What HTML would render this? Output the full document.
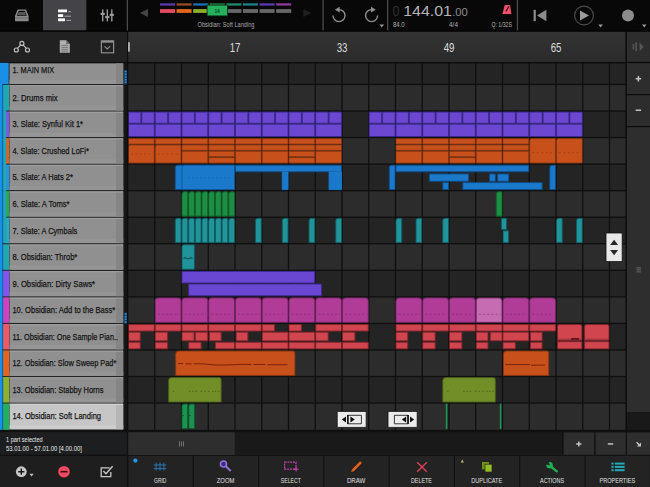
<!DOCTYPE html>
<html lang="en"><head><meta charset="utf-8"><title>Arranger</title>
<style>
html,body{margin:0;padding:0;background:#0d0d0d;overflow:hidden}
body{width:650px;height:487px;position:relative}
svg{display:block;position:absolute;left:0;top:0}
text{font-family:"Liberation Sans",sans-serif}
</style></head><body>
<svg width="650" height="487" viewBox="0 0 650 487">
<defs><linearGradient id="rul" x1="0" y1="0" x2="0" y2="1"><stop offset="0" stop-color="#343434"/><stop offset="1" stop-color="#2a2a2a"/></linearGradient></defs>
<rect x="0.00" y="0.00" width="650.00" height="487.00" fill="#0d0d0d" />
<g id="grid">
<rect x="128.00" y="62.00" width="497.80" height="368.00" fill="#242424" />
<rect x="128.00" y="84.45" width="497.80" height="26.55" fill="#2c2c2c" />
<rect x="128.00" y="137.55" width="497.80" height="26.55" fill="#2c2c2c" />
<rect x="128.00" y="190.65" width="497.80" height="26.55" fill="#2c2c2c" />
<rect x="128.00" y="243.75" width="497.80" height="26.55" fill="#2c2c2c" />
<rect x="128.00" y="296.85" width="497.80" height="26.55" fill="#2c2c2c" />
<rect x="128.00" y="349.95" width="497.80" height="26.55" fill="#2c2c2c" />
<rect x="128.00" y="403.05" width="497.80" height="26.85" fill="#2c2c2c" />
<rect x="154.10" y="62.00" width="1.30" height="368.00" fill="#0f0f0f" />
<rect x="180.85" y="62.00" width="1.30" height="368.00" fill="#0f0f0f" />
<rect x="207.60" y="62.00" width="1.30" height="368.00" fill="#0f0f0f" />
<rect x="234.35" y="62.00" width="1.30" height="368.00" fill="#0f0f0f" />
<rect x="261.10" y="62.00" width="1.30" height="368.00" fill="#0f0f0f" />
<rect x="287.85" y="62.00" width="1.30" height="368.00" fill="#0f0f0f" />
<rect x="314.60" y="62.00" width="1.30" height="368.00" fill="#0f0f0f" />
<rect x="341.35" y="62.00" width="1.30" height="368.00" fill="#0f0f0f" />
<rect x="368.10" y="62.00" width="1.30" height="368.00" fill="#0f0f0f" />
<rect x="394.85" y="62.00" width="1.30" height="368.00" fill="#0f0f0f" />
<rect x="421.60" y="62.00" width="1.30" height="368.00" fill="#0f0f0f" />
<rect x="448.35" y="62.00" width="1.30" height="368.00" fill="#0f0f0f" />
<rect x="475.10" y="62.00" width="1.30" height="368.00" fill="#0f0f0f" />
<rect x="501.85" y="62.00" width="1.30" height="368.00" fill="#0f0f0f" />
<rect x="528.60" y="62.00" width="1.30" height="368.00" fill="#0f0f0f" />
<rect x="555.35" y="62.00" width="1.30" height="368.00" fill="#0f0f0f" />
<rect x="582.10" y="62.00" width="1.30" height="368.00" fill="#0f0f0f" />
<rect x="608.85" y="62.00" width="1.30" height="368.00" fill="#0f0f0f" />
<rect x="128.00" y="83.80" width="497.80" height="1.30" fill="#0f0f0f" />
<rect x="128.00" y="110.35" width="497.80" height="1.30" fill="#0f0f0f" />
<rect x="128.00" y="136.90" width="497.80" height="1.30" fill="#0f0f0f" />
<rect x="128.00" y="163.45" width="497.80" height="1.30" fill="#0f0f0f" />
<rect x="128.00" y="190.00" width="497.80" height="1.30" fill="#0f0f0f" />
<rect x="128.00" y="216.55" width="497.80" height="1.30" fill="#0f0f0f" />
<rect x="128.00" y="243.10" width="497.80" height="1.30" fill="#0f0f0f" />
<rect x="128.00" y="269.65" width="497.80" height="1.30" fill="#0f0f0f" />
<rect x="128.00" y="296.20" width="497.80" height="1.30" fill="#0f0f0f" />
<rect x="128.00" y="322.75" width="497.80" height="1.30" fill="#0f0f0f" />
<rect x="128.00" y="349.30" width="497.80" height="1.30" fill="#0f0f0f" />
<rect x="128.00" y="375.85" width="497.80" height="1.30" fill="#0f0f0f" />
<rect x="128.00" y="402.40" width="497.80" height="1.30" fill="#0f0f0f" />
</g>
<g id="clips">
<path d="M128.45 123.25V112.05H140.93V123.25Z" fill="#6b47d2" stroke="#3c2890" stroke-width="0.9"/>
<path d="M141.82 123.25V112.05H154.30V123.25Z" fill="#6b47d2" stroke="#3c2890" stroke-width="0.9"/>
<path d="M155.20 123.25V112.05H167.68V123.25Z" fill="#6b47d2" stroke="#3c2890" stroke-width="0.9"/>
<path d="M168.57 123.25V112.05H181.05V123.25Z" fill="#6b47d2" stroke="#3c2890" stroke-width="0.9"/>
<path d="M181.95 123.25V112.05H194.43V123.25Z" fill="#6b47d2" stroke="#3c2890" stroke-width="0.9"/>
<path d="M195.32 123.25V112.05H207.80V123.25Z" fill="#6b47d2" stroke="#3c2890" stroke-width="0.9"/>
<path d="M208.70 123.25V112.05H221.18V123.25Z" fill="#6b47d2" stroke="#3c2890" stroke-width="0.9"/>
<path d="M222.07 123.25V112.05H234.55V123.25Z" fill="#6b47d2" stroke="#3c2890" stroke-width="0.9"/>
<path d="M235.45 123.25V112.05H247.93V123.25Z" fill="#6b47d2" stroke="#3c2890" stroke-width="0.9"/>
<path d="M248.82 123.25V112.05H261.30V123.25Z" fill="#6b47d2" stroke="#3c2890" stroke-width="0.9"/>
<path d="M262.20 123.25V112.05H274.68V123.25Z" fill="#6b47d2" stroke="#3c2890" stroke-width="0.9"/>
<path d="M275.57 123.25V112.05H288.05V123.25Z" fill="#6b47d2" stroke="#3c2890" stroke-width="0.9"/>
<path d="M288.95 123.25V112.05H301.43V123.25Z" fill="#6b47d2" stroke="#3c2890" stroke-width="0.9"/>
<path d="M302.32 123.25V112.05H314.80V123.25Z" fill="#6b47d2" stroke="#3c2890" stroke-width="0.9"/>
<path d="M315.70 123.25V112.05H328.18V123.25Z" fill="#6b47d2" stroke="#3c2890" stroke-width="0.9"/>
<path d="M329.07 123.25V112.05H341.55V123.25Z" fill="#6b47d2" stroke="#3c2890" stroke-width="0.9"/>
<path d="M128.45 136.50V124.15H154.30V136.50Z" fill="#6b47d2" stroke="#3c2890" stroke-width="0.9"/>
<path d="M155.20 136.50V124.15H181.05V136.50Z" fill="#6b47d2" stroke="#3c2890" stroke-width="0.9"/>
<path d="M181.95 136.50V124.15H207.80V136.50Z" fill="#6b47d2" stroke="#3c2890" stroke-width="0.9"/>
<path d="M208.70 136.50V124.15H234.55V136.50Z" fill="#6b47d2" stroke="#3c2890" stroke-width="0.9"/>
<path d="M235.45 136.50V124.15H261.30V136.50Z" fill="#6b47d2" stroke="#3c2890" stroke-width="0.9"/>
<path d="M262.20 136.50V124.15H288.05V136.50Z" fill="#6b47d2" stroke="#3c2890" stroke-width="0.9"/>
<path d="M288.95 136.50V124.15H314.80V136.50Z" fill="#6b47d2" stroke="#3c2890" stroke-width="0.9"/>
<path d="M315.70 136.50V124.15H341.55V136.50Z" fill="#6b47d2" stroke="#3c2890" stroke-width="0.9"/>
<path d="M369.20 123.25V112.05H381.68V123.25Z" fill="#6b47d2" stroke="#3c2890" stroke-width="0.9"/>
<path d="M382.57 123.25V112.05H395.05V123.25Z" fill="#6b47d2" stroke="#3c2890" stroke-width="0.9"/>
<path d="M395.95 123.25V112.05H408.43V123.25Z" fill="#6b47d2" stroke="#3c2890" stroke-width="0.9"/>
<path d="M409.32 123.25V112.05H421.80V123.25Z" fill="#6b47d2" stroke="#3c2890" stroke-width="0.9"/>
<path d="M422.70 123.25V112.05H435.18V123.25Z" fill="#6b47d2" stroke="#3c2890" stroke-width="0.9"/>
<path d="M436.07 123.25V112.05H448.55V123.25Z" fill="#6b47d2" stroke="#3c2890" stroke-width="0.9"/>
<path d="M449.45 123.25V112.05H461.93V123.25Z" fill="#6b47d2" stroke="#3c2890" stroke-width="0.9"/>
<path d="M462.82 123.25V112.05H475.30V123.25Z" fill="#6b47d2" stroke="#3c2890" stroke-width="0.9"/>
<path d="M476.20 123.25V112.05H488.68V123.25Z" fill="#6b47d2" stroke="#3c2890" stroke-width="0.9"/>
<path d="M489.57 123.25V112.05H502.05V123.25Z" fill="#6b47d2" stroke="#3c2890" stroke-width="0.9"/>
<path d="M502.95 123.25V112.05H515.42V123.25Z" fill="#6b47d2" stroke="#3c2890" stroke-width="0.9"/>
<path d="M516.33 123.25V112.05H528.80V123.25Z" fill="#6b47d2" stroke="#3c2890" stroke-width="0.9"/>
<path d="M529.70 123.25V112.05H542.17V123.25Z" fill="#6b47d2" stroke="#3c2890" stroke-width="0.9"/>
<path d="M543.08 123.25V112.05H555.55V123.25Z" fill="#6b47d2" stroke="#3c2890" stroke-width="0.9"/>
<path d="M556.45 123.25V112.05H568.92V123.25Z" fill="#6b47d2" stroke="#3c2890" stroke-width="0.9"/>
<path d="M569.83 123.25V112.05H582.30V123.25Z" fill="#6b47d2" stroke="#3c2890" stroke-width="0.9"/>
<path d="M369.20 136.50V124.15H395.05V136.50Z" fill="#6b47d2" stroke="#3c2890" stroke-width="0.9"/>
<path d="M395.95 136.50V124.15H421.80V136.50Z" fill="#6b47d2" stroke="#3c2890" stroke-width="0.9"/>
<path d="M422.70 136.50V124.15H448.55V136.50Z" fill="#6b47d2" stroke="#3c2890" stroke-width="0.9"/>
<path d="M449.45 136.50V124.15H475.30V136.50Z" fill="#6b47d2" stroke="#3c2890" stroke-width="0.9"/>
<path d="M476.20 136.50V124.15H502.05V136.50Z" fill="#6b47d2" stroke="#3c2890" stroke-width="0.9"/>
<path d="M502.95 136.50V124.15H528.80V136.50Z" fill="#6b47d2" stroke="#3c2890" stroke-width="0.9"/>
<path d="M529.70 136.50V124.15H555.55V136.50Z" fill="#6b47d2" stroke="#3c2890" stroke-width="0.9"/>
<path d="M556.45 136.50V124.15H582.30V136.50Z" fill="#6b47d2" stroke="#3c2890" stroke-width="0.9"/>
<path d="M128.45 144.10V138.60H154.30V144.10Z" fill="#c8501a" stroke="#843410" stroke-width="0.75"/>
<path d="M128.45 163.05V147.00Q128.45 145.00 130.45 145.00H154.30V163.05Z" fill="#c8501a" stroke="#843410" stroke-width="0.75"/>
<path d="M131.00 154.05H152.75" stroke="#843410" stroke-width="0.8" stroke-dasharray="2 2.4" opacity="0.55"/>
<path d="M155.20 144.10V138.60H181.05V144.10Z" fill="#c8501a" stroke="#843410" stroke-width="0.75"/>
<path d="M155.20 163.05V147.00Q155.20 145.00 157.20 145.00H181.05V163.05Z" fill="#c8501a" stroke="#843410" stroke-width="0.75"/>
<path d="M157.75 154.05H179.50" stroke="#843410" stroke-width="0.8" stroke-dasharray="2 2.4" opacity="0.55"/>
<path d="M181.95 144.10V138.60H207.80V144.10Z" fill="#c8501a" stroke="#843410" stroke-width="0.75"/>
<path d="M181.95 150.30V145.00H207.80V150.30Z" fill="#c8501a" stroke="#843410" stroke-width="0.75"/>
<path d="M181.95 163.05V151.20H207.80V163.05Z" fill="#c8501a" stroke="#843410" stroke-width="0.75"/>
<path d="M208.70 144.10V138.60H234.55V144.10Z" fill="#c8501a" stroke="#843410" stroke-width="0.75"/>
<path d="M208.70 150.30V145.00H234.55V150.30Z" fill="#c8501a" stroke="#843410" stroke-width="0.75"/>
<path d="M208.70 156.70V151.20H234.55V156.70Z" fill="#c8501a" stroke="#843410" stroke-width="0.75"/>
<path d="M208.70 163.05V157.60H234.55V163.05Z" fill="#c8501a" stroke="#843410" stroke-width="0.75"/>
<path d="M235.45 144.10V138.60H261.30V144.10Z" fill="#c8501a" stroke="#843410" stroke-width="0.75"/>
<path d="M235.45 150.30V145.00H261.30V150.30Z" fill="#c8501a" stroke="#843410" stroke-width="0.75"/>
<path d="M235.45 163.05V151.20H261.30V163.05Z" fill="#c8501a" stroke="#843410" stroke-width="0.75"/>
<path d="M262.20 144.10V138.60H288.05V144.10Z" fill="#c8501a" stroke="#843410" stroke-width="0.75"/>
<path d="M262.20 150.30V145.00H288.05V150.30Z" fill="#c8501a" stroke="#843410" stroke-width="0.75"/>
<path d="M262.20 163.05V151.20H288.05V163.05Z" fill="#c8501a" stroke="#843410" stroke-width="0.75"/>
<path d="M288.95 144.10V138.60H314.80V144.10Z" fill="#c8501a" stroke="#843410" stroke-width="0.75"/>
<path d="M288.95 150.30V145.00H314.80V150.30Z" fill="#c8501a" stroke="#843410" stroke-width="0.75"/>
<path d="M288.95 156.70V151.20H314.80V156.70Z" fill="#c8501a" stroke="#843410" stroke-width="0.75"/>
<path d="M288.95 163.05V157.60H314.80V163.05Z" fill="#c8501a" stroke="#843410" stroke-width="0.75"/>
<path d="M315.70 144.10V138.60H341.55V144.10Z" fill="#c8501a" stroke="#843410" stroke-width="0.75"/>
<path d="M315.70 150.30V145.00H341.55V150.30Z" fill="#c8501a" stroke="#843410" stroke-width="0.75"/>
<path d="M315.70 163.05V151.20H341.55V163.05Z" fill="#c8501a" stroke="#843410" stroke-width="0.75"/>
<path d="M395.95 144.10V138.60H421.80V144.10Z" fill="#c8501a" stroke="#843410" stroke-width="0.75"/>
<path d="M395.95 150.30V145.00H421.80V150.30Z" fill="#c8501a" stroke="#843410" stroke-width="0.75"/>
<path d="M395.95 163.05V151.20H421.80V163.05Z" fill="#c8501a" stroke="#843410" stroke-width="0.75"/>
<path d="M422.70 144.10V138.60H448.55V144.10Z" fill="#c8501a" stroke="#843410" stroke-width="0.75"/>
<path d="M422.70 150.30V145.00H448.55V150.30Z" fill="#c8501a" stroke="#843410" stroke-width="0.75"/>
<path d="M422.70 163.05V151.20H448.55V163.05Z" fill="#c8501a" stroke="#843410" stroke-width="0.75"/>
<path d="M449.45 144.10V138.60H475.30V144.10Z" fill="#c8501a" stroke="#843410" stroke-width="0.75"/>
<path d="M449.45 150.30V145.00H475.30V150.30Z" fill="#c8501a" stroke="#843410" stroke-width="0.75"/>
<path d="M449.45 156.70V151.20H475.30V156.70Z" fill="#c8501a" stroke="#843410" stroke-width="0.75"/>
<path d="M449.45 163.05V157.60H475.30V163.05Z" fill="#c8501a" stroke="#843410" stroke-width="0.75"/>
<path d="M476.20 144.10V138.60H502.05V144.10Z" fill="#c8501a" stroke="#843410" stroke-width="0.75"/>
<path d="M476.20 150.30V145.00H502.05V150.30Z" fill="#c8501a" stroke="#843410" stroke-width="0.75"/>
<path d="M476.20 163.05V151.20H502.05V163.05Z" fill="#c8501a" stroke="#843410" stroke-width="0.75"/>
<path d="M502.95 144.10V138.60H528.80V144.10Z" fill="#c8501a" stroke="#843410" stroke-width="0.75"/>
<path d="M502.95 150.30V145.00H528.80V150.30Z" fill="#c8501a" stroke="#843410" stroke-width="0.75"/>
<path d="M502.95 163.05V151.20H528.80V163.05Z" fill="#c8501a" stroke="#843410" stroke-width="0.75"/>
<path d="M529.70 163.05V140.60Q529.70 138.60 531.70 138.60H555.55V163.05Z" fill="#c8501a" stroke="#843410" stroke-width="0.75"/>
<path d="M532.25 152.65H554.00" stroke="#843410" stroke-width="0.8" stroke-dasharray="2 2.4" opacity="0.55"/>
<path d="M556.45 163.05V140.60Q556.45 138.60 558.45 138.60H582.30V163.05Z" fill="#c8501a" stroke="#843410" stroke-width="0.75"/>
<path d="M559.00 152.65H580.75" stroke="#843410" stroke-width="0.8" stroke-dasharray="2 2.4" opacity="0.55"/>
<path d="M175.26 189.60V167.65Q175.26 165.15 177.76 165.15H234.55V189.60Z" fill="#1a79ca" stroke="#0f4c86" stroke-width="0.9"/>
<path d="M181.95 189.60V167.65Q181.95 165.15 184.45 165.15H234.55V189.60Z" fill="#1a79ca" stroke="#0f4c86" stroke-width="0.6"/>
<path d="M188.19 177.70H231.66" stroke="#0f4c86" stroke-width="0.7" stroke-dasharray="1.5 2.5" opacity="0.5"/>
<path d="M235.45 171.85V165.15H341.55V171.85Z" fill="#1a79ca" stroke="#0f4c86" stroke-width="0.9"/>
<path d="M282.26 189.60V171.85H288.05V189.60Z" fill="#1a79ca" stroke="#1a79ca" stroke-width="0.9"/>
<path d="M329.07 189.60V171.85H341.55V189.60Z" fill="#1a79ca" stroke="#1a79ca" stroke-width="0.9"/>
<path d="M389.26 189.60V167.65Q389.26 165.15 391.76 165.15H395.05V189.60Z" fill="#1a79ca" stroke="#0f4c86" stroke-width="0.9"/>
<path d="M395.95 171.85V165.15H528.80V171.85Z" fill="#1a79ca" stroke="#0f4c86" stroke-width="0.9"/>
<path d="M429.39 181.25V173.95H468.61V181.25Z" fill="#1a79ca" stroke="#0f4c86" stroke-width="0.9"/>
<path d="M489.57 181.25V173.95H495.36V181.25Z" fill="#1a79ca" stroke="#0f4c86" stroke-width="0.9"/>
<path d="M497.60 181.25V173.95H508.74V181.25Z" fill="#1a79ca" stroke="#0f4c86" stroke-width="0.9"/>
<path d="M442.76 189.60V182.55H448.55V189.60Z" fill="#1a79ca" stroke="#0f4c86" stroke-width="0.9"/>
<path d="M462.82 189.60V182.55H542.17V189.60Z" fill="#1a79ca" stroke="#0f4c86" stroke-width="0.9"/>
<path d="M549.76 189.60V167.65Q549.76 165.15 552.26 165.15H555.55V189.60Z" fill="#1a79ca" stroke="#0f4c86" stroke-width="0.9"/>
<path d="M181.95 216.15V194.20Q181.95 191.70 184.45 191.70H186.24Q187.74 191.70 187.74 193.20V216.15Z" fill="#1e8e44" stroke="#0e6028" stroke-width="0.9"/>
<path d="M188.64 216.15V194.20Q188.64 191.70 191.14 191.70H192.93Q194.43 191.70 194.43 193.20V216.15Z" fill="#1e8e44" stroke="#0e6028" stroke-width="0.9"/>
<path d="M195.32 216.15V194.20Q195.32 191.70 197.82 191.70H199.61Q201.11 191.70 201.11 193.20V216.15Z" fill="#1e8e44" stroke="#0e6028" stroke-width="0.9"/>
<path d="M202.01 216.15V194.20Q202.01 191.70 204.51 191.70H206.30Q207.80 191.70 207.80 193.20V216.15Z" fill="#1e8e44" stroke="#0e6028" stroke-width="0.9"/>
<path d="M208.70 216.15V194.20Q208.70 191.70 211.20 191.70H212.99Q214.49 191.70 214.49 193.20V216.15Z" fill="#1e8e44" stroke="#0e6028" stroke-width="0.9"/>
<path d="M215.39 216.15V194.20Q215.39 191.70 217.89 191.70H219.68Q221.18 191.70 221.18 193.20V216.15Z" fill="#1e8e44" stroke="#0e6028" stroke-width="0.9"/>
<path d="M222.07 216.15V194.20Q222.07 191.70 224.57 191.70H226.36Q227.86 191.70 227.86 193.20V216.15Z" fill="#1e8e44" stroke="#0e6028" stroke-width="0.9"/>
<path d="M228.76 216.15V194.20Q228.76 191.70 231.26 191.70H233.05Q234.55 191.70 234.55 193.20V216.15Z" fill="#1e8e44" stroke="#0e6028" stroke-width="0.9"/>
<path d="M496.26 216.15V194.20Q496.26 191.70 498.76 191.70H502.05V216.15Z" fill="#1e8e44" stroke="#0e6028" stroke-width="0.9"/>
<path d="M175.26 242.70V220.75Q175.26 218.25 177.76 218.25H179.55Q181.05 218.25 181.05 219.75V242.70Z" fill="#20949a" stroke="#115a60" stroke-width="0.9"/>
<path d="M181.95 242.70V220.75Q181.95 218.25 184.45 218.25H186.24Q187.74 218.25 187.74 219.75V242.70Z" fill="#20949a" stroke="#115a60" stroke-width="0.9"/>
<path d="M188.64 242.70V220.75Q188.64 218.25 191.14 218.25H192.93Q194.43 218.25 194.43 219.75V242.70Z" fill="#20949a" stroke="#115a60" stroke-width="0.9"/>
<path d="M195.32 242.70V220.75Q195.32 218.25 197.82 218.25H199.61Q201.11 218.25 201.11 219.75V242.70Z" fill="#20949a" stroke="#115a60" stroke-width="0.9"/>
<path d="M202.01 242.70V220.75Q202.01 218.25 204.51 218.25H206.30Q207.80 218.25 207.80 219.75V242.70Z" fill="#20949a" stroke="#115a60" stroke-width="0.9"/>
<path d="M208.70 242.70V220.75Q208.70 218.25 211.20 218.25H212.99Q214.49 218.25 214.49 219.75V242.70Z" fill="#20949a" stroke="#115a60" stroke-width="0.9"/>
<path d="M215.39 242.70V220.75Q215.39 218.25 217.89 218.25H219.68Q221.18 218.25 221.18 219.75V242.70Z" fill="#20949a" stroke="#115a60" stroke-width="0.9"/>
<path d="M222.07 242.70V220.75Q222.07 218.25 224.57 218.25H226.36Q227.86 218.25 227.86 219.75V242.70Z" fill="#20949a" stroke="#115a60" stroke-width="0.9"/>
<path d="M228.76 242.70V220.75Q228.76 218.25 231.26 218.25H233.05Q234.55 218.25 234.55 219.75V242.70Z" fill="#20949a" stroke="#115a60" stroke-width="0.9"/>
<path d="M255.51 242.70V220.75Q255.51 218.25 258.01 218.25H261.30V242.70Z" fill="#20949a" stroke="#115a60" stroke-width="0.9"/>
<path d="M282.26 242.70V220.75Q282.26 218.25 284.76 218.25H288.05V242.70Z" fill="#20949a" stroke="#115a60" stroke-width="0.9"/>
<path d="M309.01 242.70V220.75Q309.01 218.25 311.51 218.25H314.80V242.70Z" fill="#20949a" stroke="#115a60" stroke-width="0.9"/>
<path d="M335.76 242.70V220.75Q335.76 218.25 338.26 218.25H341.55V242.70Z" fill="#20949a" stroke="#115a60" stroke-width="0.9"/>
<path d="M395.95 242.70V220.75Q395.95 218.25 398.45 218.25H401.74V242.70Z" fill="#20949a" stroke="#115a60" stroke-width="0.9"/>
<path d="M416.01 242.70V220.75Q416.01 218.25 418.51 218.25H421.80V242.70Z" fill="#20949a" stroke="#115a60" stroke-width="0.9"/>
<path d="M442.76 242.70V220.75Q442.76 218.25 445.26 218.25H448.55V242.70Z" fill="#20949a" stroke="#115a60" stroke-width="0.9"/>
<path d="M556.45 242.70V220.75Q556.45 218.25 558.95 218.25H562.24V242.70Z" fill="#20949a" stroke="#115a60" stroke-width="0.9"/>
<path d="M576.51 242.70V220.75Q576.51 218.25 579.01 218.25H582.30V242.70Z" fill="#20949a" stroke="#115a60" stroke-width="0.9"/>
<path d="M501.45 229.55V218.25H506.55V229.55Z" fill="#20949a" stroke="#115a60" stroke-width="0.9"/>
<path d="M503.05 242.70V230.85H508.55V242.70Z" fill="#20949a" stroke="#115a60" stroke-width="0.9"/>
<path d="M181.95 269.25V246.80Q181.95 244.80 183.95 244.80H194.43V269.25Z" fill="#20949a" stroke="#115a60" stroke-width="0.9"/>
<path d="M183.50 258.35q1.5 -1.2 3 0t3 0t3 0" fill="none" stroke="#0c3a40" stroke-width="1"/>
<path d="M181.95 282.95V271.35H314.80V282.95Z" fill="#6a47d2" stroke="#3c2890" stroke-width="0.9"/>
<path d="M188.64 295.80V284.05H321.49V295.80Z" fill="#6a47d2" stroke="#3c2890" stroke-width="0.9"/>
<path d="M155.20 322.35V300.90Q155.20 297.90 158.20 297.90H178.05Q181.05 297.90 181.05 300.90V322.35Z" fill="#b03c98" stroke="#702262" stroke-width="0.9"/>
<path d="M157.75 314.25H179.50" stroke="#702262" stroke-width="0.8" stroke-dasharray="2.2 2" opacity="0.55"/>
<path d="M181.95 322.35V300.90Q181.95 297.90 184.95 297.90H204.80Q207.80 297.90 207.80 300.90V322.35Z" fill="#b03c98" stroke="#702262" stroke-width="0.9"/>
<path d="M184.50 314.25H206.25" stroke="#702262" stroke-width="0.8" stroke-dasharray="2.2 2" opacity="0.55"/>
<path d="M208.70 322.35V300.90Q208.70 297.90 211.70 297.90H231.55Q234.55 297.90 234.55 300.90V322.35Z" fill="#b03c98" stroke="#702262" stroke-width="0.9"/>
<path d="M211.25 314.25H233.00" stroke="#702262" stroke-width="0.8" stroke-dasharray="2.2 2" opacity="0.55"/>
<path d="M235.45 322.35V300.90Q235.45 297.90 238.45 297.90H258.30Q261.30 297.90 261.30 300.90V322.35Z" fill="#b03c98" stroke="#702262" stroke-width="0.9"/>
<path d="M238.00 314.25H259.75" stroke="#702262" stroke-width="0.8" stroke-dasharray="2.2 2" opacity="0.55"/>
<path d="M262.20 322.35V300.90Q262.20 297.90 265.20 297.90H285.05Q288.05 297.90 288.05 300.90V322.35Z" fill="#b03c98" stroke="#702262" stroke-width="0.9"/>
<path d="M264.75 314.25H286.50" stroke="#702262" stroke-width="0.8" stroke-dasharray="2.2 2" opacity="0.55"/>
<path d="M288.95 322.35V300.90Q288.95 297.90 291.95 297.90H311.80Q314.80 297.90 314.80 300.90V322.35Z" fill="#b03c98" stroke="#702262" stroke-width="0.9"/>
<path d="M291.50 314.25H313.25" stroke="#702262" stroke-width="0.8" stroke-dasharray="2.2 2" opacity="0.55"/>
<path d="M315.70 322.35V300.90Q315.70 297.90 318.70 297.90H338.55Q341.55 297.90 341.55 300.90V322.35Z" fill="#b03c98" stroke="#702262" stroke-width="0.9"/>
<path d="M318.25 314.25H340.00" stroke="#702262" stroke-width="0.8" stroke-dasharray="2.2 2" opacity="0.55"/>
<path d="M342.45 322.35V300.90Q342.45 297.90 345.45 297.90H365.30Q368.30 297.90 368.30 300.90V322.35Z" fill="#b03c98" stroke="#702262" stroke-width="0.9"/>
<path d="M345.00 314.25H366.75" stroke="#702262" stroke-width="0.8" stroke-dasharray="2.2 2" opacity="0.55"/>
<path d="M395.95 322.35V300.90Q395.95 297.90 398.95 297.90H418.80Q421.80 297.90 421.80 300.90V322.35Z" fill="#b03c98" stroke="#702262" stroke-width="0.9"/>
<path d="M398.50 314.25H420.25" stroke="#702262" stroke-width="0.8" stroke-dasharray="2.2 2" opacity="0.55"/>
<path d="M422.70 322.35V300.90Q422.70 297.90 425.70 297.90H445.55Q448.55 297.90 448.55 300.90V322.35Z" fill="#b03c98" stroke="#702262" stroke-width="0.9"/>
<path d="M425.25 314.25H447.00" stroke="#702262" stroke-width="0.8" stroke-dasharray="2.2 2" opacity="0.55"/>
<path d="M449.45 322.35V300.90Q449.45 297.90 452.45 297.90H472.30Q475.30 297.90 475.30 300.90V322.35Z" fill="#b03c98" stroke="#702262" stroke-width="0.9"/>
<path d="M452.00 314.25H473.75" stroke="#702262" stroke-width="0.8" stroke-dasharray="2.2 2" opacity="0.55"/>
<path d="M476.20 322.35V300.90Q476.20 297.90 479.20 297.90H499.05Q502.05 297.90 502.05 300.90V322.35Z" fill="#c66cb2" stroke="#702262" stroke-width="0.9"/>
<path d="M478.75 314.25H500.50" stroke="#702262" stroke-width="0.8" stroke-dasharray="2.2 2" opacity="0.55"/>
<path d="M502.95 322.35V300.90Q502.95 297.90 505.95 297.90H525.80Q528.80 297.90 528.80 300.90V322.35Z" fill="#b03c98" stroke="#702262" stroke-width="0.9"/>
<path d="M505.50 314.25H527.25" stroke="#702262" stroke-width="0.8" stroke-dasharray="2.2 2" opacity="0.55"/>
<path d="M529.70 322.35V300.90Q529.70 297.90 532.70 297.90H552.55Q555.55 297.90 555.55 300.90V322.35Z" fill="#b03c98" stroke="#702262" stroke-width="0.9"/>
<path d="M532.25 314.25H554.00" stroke="#702262" stroke-width="0.8" stroke-dasharray="2.2 2" opacity="0.55"/>
<path d="M128.45 331.05V324.45H154.30V331.05Z" fill="#d0454e" stroke="#7e222a" stroke-width="0.9"/>
<path d="M155.20 331.05V324.45H181.05V331.05Z" fill="#d0454e" stroke="#7e222a" stroke-width="0.9"/>
<path d="M181.95 331.05V324.45H207.80V331.05Z" fill="#d0454e" stroke="#7e222a" stroke-width="0.9"/>
<path d="M208.70 331.05V324.45H234.55V331.05Z" fill="#d0454e" stroke="#7e222a" stroke-width="0.9"/>
<path d="M235.45 331.05V324.45H261.30V331.05Z" fill="#d0454e" stroke="#7e222a" stroke-width="0.9"/>
<path d="M262.20 331.05V324.45H274.68V331.05Z" fill="#d0454e" stroke="#7e222a" stroke-width="0.9"/>
<path d="M288.95 331.05V324.45H301.43V331.05Z" fill="#d0454e" stroke="#7e222a" stroke-width="0.9"/>
<path d="M315.70 331.05V324.45H341.55V331.05Z" fill="#d0454e" stroke="#7e222a" stroke-width="0.9"/>
<path d="M342.45 331.05V324.45H368.30V331.05Z" fill="#d0454e" stroke="#7e222a" stroke-width="0.9"/>
<path d="M128.45 340.85V332.15H140.26V340.85Z" fill="#d0454e" stroke="#7e222a" stroke-width="0.9"/>
<path d="M155.20 340.85V332.15H167.68V340.85Z" fill="#d0454e" stroke="#7e222a" stroke-width="0.9"/>
<path d="M181.95 340.85V332.15H194.09V340.85Z" fill="#d0454e" stroke="#7e222a" stroke-width="0.9"/>
<path d="M195.32 340.85V332.15H207.80V340.85Z" fill="#d0454e" stroke="#7e222a" stroke-width="0.9"/>
<path d="M209.37 340.85V332.15H221.18V340.85Z" fill="#d0454e" stroke="#7e222a" stroke-width="0.9"/>
<path d="M236.12 340.85V332.15H247.93V340.85Z" fill="#d0454e" stroke="#7e222a" stroke-width="0.9"/>
<path d="M262.20 340.85V332.15H288.05V340.85Z" fill="#d0454e" stroke="#7e222a" stroke-width="0.9"/>
<path d="M288.95 340.85V332.15H314.80V340.85Z" fill="#d0454e" stroke="#7e222a" stroke-width="0.9"/>
<path d="M315.70 340.85V332.15H328.18V340.85Z" fill="#d0454e" stroke="#7e222a" stroke-width="0.9"/>
<path d="M342.45 340.85V332.15H354.93V340.85Z" fill="#d0454e" stroke="#7e222a" stroke-width="0.9"/>
<path d="M128.45 348.90V342.25H140.26V348.90Z" fill="#d0454e" stroke="#7e222a" stroke-width="0.9"/>
<path d="M155.20 348.90V342.25H167.68V348.90Z" fill="#d0454e" stroke="#7e222a" stroke-width="0.9"/>
<path d="M188.64 348.90V342.25H201.11V348.90Z" fill="#d0454e" stroke="#7e222a" stroke-width="0.9"/>
<path d="M215.39 348.90V342.25H234.55V348.90Z" fill="#d0454e" stroke="#7e222a" stroke-width="0.9"/>
<path d="M235.45 348.90V342.25H261.30V348.90Z" fill="#d0454e" stroke="#7e222a" stroke-width="0.9"/>
<path d="M262.20 348.90V342.25H288.05V348.90Z" fill="#d0454e" stroke="#7e222a" stroke-width="0.9"/>
<path d="M288.95 348.90V342.25H314.80V348.90Z" fill="#d0454e" stroke="#7e222a" stroke-width="0.9"/>
<path d="M315.70 348.90V342.25H341.55V348.90Z" fill="#d0454e" stroke="#7e222a" stroke-width="0.9"/>
<path d="M342.45 348.90V342.25H368.30V348.90Z" fill="#d0454e" stroke="#7e222a" stroke-width="0.9"/>
<path d="M395.95 331.05V324.45H421.80V331.05Z" fill="#d0454e" stroke="#7e222a" stroke-width="0.9"/>
<path d="M422.70 331.05V324.45H448.55V331.05Z" fill="#d0454e" stroke="#7e222a" stroke-width="0.9"/>
<path d="M449.45 331.05V324.45H475.30V331.05Z" fill="#d0454e" stroke="#7e222a" stroke-width="0.9"/>
<path d="M476.20 331.05V324.45H502.05V331.05Z" fill="#d0454e" stroke="#7e222a" stroke-width="0.9"/>
<path d="M502.95 331.05V324.45H528.80V331.05Z" fill="#d0454e" stroke="#7e222a" stroke-width="0.9"/>
<path d="M529.70 331.05V324.45H555.55V331.05Z" fill="#d0454e" stroke="#7e222a" stroke-width="0.9"/>
<path d="M395.95 340.85V332.15H407.76V340.85Z" fill="#d0454e" stroke="#7e222a" stroke-width="0.9"/>
<path d="M422.70 340.85V332.15H435.18V340.85Z" fill="#d0454e" stroke="#7e222a" stroke-width="0.9"/>
<path d="M449.45 340.85V332.15H461.93V340.85Z" fill="#d0454e" stroke="#7e222a" stroke-width="0.9"/>
<path d="M476.20 340.85V332.15H488.01V340.85Z" fill="#d0454e" stroke="#7e222a" stroke-width="0.9"/>
<path d="M490.24 340.85V332.15H502.05V340.85Z" fill="#d0454e" stroke="#7e222a" stroke-width="0.9"/>
<path d="M502.95 340.85V332.15H528.80V340.85Z" fill="#d0454e" stroke="#7e222a" stroke-width="0.9"/>
<path d="M530.37 340.85V332.15H542.17V340.85Z" fill="#d0454e" stroke="#7e222a" stroke-width="0.9"/>
<path d="M395.95 348.90V342.25H407.76V348.90Z" fill="#d0454e" stroke="#7e222a" stroke-width="0.9"/>
<path d="M422.70 348.90V342.25H435.18V348.90Z" fill="#d0454e" stroke="#7e222a" stroke-width="0.9"/>
<path d="M449.45 348.90V342.25H461.93V348.90Z" fill="#d0454e" stroke="#7e222a" stroke-width="0.9"/>
<path d="M476.20 348.90V342.25H488.01V348.90Z" fill="#d0454e" stroke="#7e222a" stroke-width="0.9"/>
<path d="M502.95 348.90V342.25H515.42V348.90Z" fill="#d0454e" stroke="#7e222a" stroke-width="0.9"/>
<path d="M530.37 348.90V342.25H542.17V348.90Z" fill="#d0454e" stroke="#7e222a" stroke-width="0.9"/>
<path d="M557.45 340.25V326.45Q557.45 324.45 559.45 324.45H579.95Q581.95 324.45 581.95 326.45V340.25Z" fill="#d0454e" stroke="#7e222a" stroke-width="0.9"/>
<path d="M557.45 348.90V341.65H581.95V348.90Z" fill="#d0454e" stroke="#7e222a" stroke-width="0.9"/>
<path d="M584.54 340.25V326.45Q584.54 324.45 586.54 324.45H607.04Q609.04 324.45 609.04 326.45V340.25Z" fill="#d0454e" stroke="#7e222a" stroke-width="0.9"/>
<path d="M584.54 348.90V341.65H609.04V348.90Z" fill="#d0454e" stroke="#7e222a" stroke-width="0.9"/>
<path d="M559.00 339.10H582.75M586.09 339.10H609.50" stroke="#7e222a" stroke-width="0.8" opacity="0.6"/>
<path d="M571 338.90h8" stroke="#5a1018" stroke-width="1.6"/>
<path d="M175.65 375.45V354.00Q175.65 351.00 178.65 351.00H292.95Q294.95 351.00 294.95 353.00V375.45Z" fill="#c8501a" stroke="#843410" stroke-width="0.9"/>
<path d="M178 363.55h5m2.5 0.3h6m2 0h10q10 1.6 22 1.2q14 -1 26 -0.6m2 0h12m2 0.3h20" fill="none" stroke="#7a240c" stroke-width="1"/>
<path d="M503.45 375.45V354.00Q503.45 351.00 506.45 351.00H546.75Q548.75 351.00 548.75 353.00V375.45Z" fill="#c8501a" stroke="#843410" stroke-width="0.9"/>
<path d="M505 364.55h25m1 0.6h14" fill="none" stroke="#7a240c" stroke-width="1"/>
<path d="M168.57 402.00V380.55Q168.57 377.55 171.57 377.55H219.18Q221.18 377.55 221.18 379.55V402.00Z" fill="#718e28" stroke="#485c16" stroke-width="0.9"/>
<path d="M442.76 402.00V380.55Q442.76 377.55 445.76 377.55H493.36Q495.36 377.55 495.36 379.55V402.00Z" fill="#718e28" stroke="#485c16" stroke-width="0.9"/>
<path d="M173.12 391.30h1m15 0h1.2m2 0h1.2m2 0h1.2m4 0h1.2m2.5 0h1.2m2.5 0h1.2m3 0h1.2m1.5 0h1.2m2 0h1.2" stroke="#3c4c10" stroke-width="0.9" opacity="0.8"/>
<path d="M447.31 391.30h1m15 0h1.2m2 0h1.2m2 0h1.2m4 0h1.2m2.5 0h1.2m2.5 0h1.2m3 0h1.2m1.5 0h1.2m2 0h1.2" stroke="#3c4c10" stroke-width="0.9" opacity="0.8"/>
<path d="M181.95 428.55V406.10Q181.95 404.10 183.95 404.10H186.54Q187.54 404.10 187.54 405.10V428.55Z" fill="#1a9450" stroke="#0e5c30" stroke-width="0.9"/>
<path d="M188.84 428.55V406.10Q188.84 404.10 190.84 404.10H193.43Q194.43 404.10 194.43 405.10V428.55Z" fill="#1a9450" stroke="#0e5c30" stroke-width="0.9"/>
<path d="M182.00 415.65h2M188.99 415.65h2" stroke="#0e5c30" stroke-width="1"/>
<rect x="445.80" y="403.65" width="1.60" height="25.35" fill="#1a9450" />
<rect x="499.80" y="403.65" width="1.60" height="25.35" fill="#1a9450" />
</g>
<g id="widgets">
<rect x="606.00" y="233.00" width="16.20" height="28.60" fill="#e9e9e9" rx="1" stroke="#0e0e0e" stroke-width="0.8" />
<path d="M614.1 239.8l4 5.2h-8zM614.1 255.2l4 -5.2h-8z" fill="#2a2a2a"/>
<rect x="337.20" y="411.40" width="29.00" height="16.00" fill="#ececec" rx="1" stroke="#0e0e0e" stroke-width="0.8" />
<path d="M347.6 415.3H361.4V423.8H347.6z" fill="none" stroke="#222" stroke-width="0.9"/><path d="M347.9 415v9" stroke="#111" stroke-width="1.6"/>
<path d="M341.8 419.5l4.2 -2.9v5.8zM354.8 419.5l-4.4 -2.9v5.8z" fill="#111"/>
<rect x="388.00" y="411.40" width="29.20" height="16.00" fill="#ececec" rx="1" stroke="#0e0e0e" stroke-width="0.8" />
<path d="M394.4 415.3H408.2V423.8H394.4z" fill="none" stroke="#222" stroke-width="0.9"/><path d="M408 415v9" stroke="#111" stroke-width="1.6"/>
<path d="M401.8 419.5l4.4 -2.9v5.8zM414.2 419.5l-4.2 -2.9v5.8z" fill="#111"/>
</g>
<g id="topbar">
<rect x="0.00" y="0.00" width="650.00" height="31.60" fill="#080808" />
<rect x="43.00" y="0.00" width="43.40" height="30.50" fill="#444448" />
<rect x="0.00" y="30.50" width="650.00" height="1.10" fill="#000" />
<rect x="126.70" y="0.00" width="1.30" height="30.50" fill="#4a4a4a" />
<rect x="322.40" y="0.00" width="1.30" height="30.50" fill="#4a4a4a" />
<rect x="387.00" y="0.00" width="1.30" height="30.50" fill="#4a4a4a" />
<rect x="516.80" y="0.00" width="1.30" height="30.50" fill="#4a4a4a" />
</g>
<g id="ruler">
<rect x="0.00" y="31.80" width="127.00" height="30.20" fill="#212121" />
<rect x="128.00" y="31.80" width="497.60" height="30.20" fill="url(#rul)" />
<rect x="127.00" y="31.80" width="1.20" height="31.00" fill="#0c0c0c" />
<rect x="0.00" y="62.00" width="650.00" height="1.40" fill="#0c0c0c" />
<rect x="128.20" y="42.20" width="1.50" height="9.40" fill="#d0d0d0" />
<text x="235.10" y="52.00" font-size="12.8" fill="#dcdcdc" text-anchor="middle" textLength="10.8" lengthAdjust="spacingAndGlyphs" >17</text>
<text x="342.10" y="52.00" font-size="12.8" fill="#dcdcdc" text-anchor="middle" textLength="10.8" lengthAdjust="spacingAndGlyphs" >33</text>
<text x="449.10" y="52.00" font-size="12.8" fill="#dcdcdc" text-anchor="middle" textLength="10.8" lengthAdjust="spacingAndGlyphs" >49</text>
<text x="556.10" y="52.00" font-size="12.8" fill="#dcdcdc" text-anchor="middle" textLength="10.8" lengthAdjust="spacingAndGlyphs" >65</text>
</g>
<g id="rightpanel">
<rect x="625.60" y="31.80" width="24.40" height="424.00" fill="#0c0c0c" />
<rect x="626.90" y="31.80" width="23.10" height="30.00" fill="#2d2d2d" />
<rect x="626.90" y="63.20" width="23.10" height="30.80" fill="#2d2d2d" />
<rect x="626.90" y="95.20" width="23.10" height="30.80" fill="#2d2d2d" />
<rect x="626.90" y="127.20" width="23.10" height="285.00" fill="#2e2e2e" />
<rect x="626.90" y="412.20" width="23.10" height="19.00" fill="#191919" />
<g fill="#555"><rect x="632.6" y="44" width="1.6" height="5.4"/><rect x="635.4" y="42.2" width="1.6" height="9"/><path d="M639.6 42.4l4 4.4l-4 4.4z"/></g>
<path d="M635.7 78.7h5.4M638.4 76v5.4" stroke="#c4c4c4" stroke-width="1.5"/>
<rect x="635.70" y="109.50" width="5.40" height="1.50" fill="#c4c4c4" />
<g fill="#6a6a6a"><rect x="636.4" y="267.4" width="4.6" height="0.9"/><rect x="636.4" y="269.4" width="4.6" height="0.9"/><rect x="636.4" y="271.4" width="4.6" height="0.9"/></g>
</g>
<g id="tracks">
<rect x="0.00" y="62.80" width="128.00" height="368.00" fill="#161616" />
<rect x="0.00" y="62.80" width="8.80" height="367.20" fill="#1a8fe8" />
<rect x="8.80" y="62.80" width="0.80" height="367.20" fill="#2a3a44" />
<rect x="9.60" y="63.40" width="113.60" height="21.05" fill="#2a2a2a" />
<rect x="9.60" y="63.40" width="113.60" height="20.45" fill="#909090" />
<rect x="9.60" y="79.65" width="113.60" height="4.20" fill="#959595" />
<rect x="116.00" y="63.40" width="7.20" height="20.45" fill="#858585" />
<text x="12.40" y="73.47" font-size="9.9" fill="#121212" textLength="41.8" lengthAdjust="spacingAndGlyphs" stroke="#151515" stroke-width="0.25">1. MAIN MIX</text>
<rect x="2.40" y="83.95" width="0.90" height="27.05" fill="#15507a" />
<rect x="3.30" y="84.45" width="6.10" height="26.55" fill="#1fa7b2" />
<rect x="2.40" y="83.95" width="7.00" height="1.00" fill="#143a44" />
<rect x="9.60" y="84.45" width="113.60" height="26.55" fill="#2a2a2a" />
<rect x="9.60" y="85.15" width="113.60" height="25.25" fill="#909090" />
<rect x="9.60" y="85.15" width="113.60" height="1.30" fill="#9d9d9d" />
<rect x="9.60" y="106.20" width="113.60" height="4.20" fill="#959595" />
<rect x="116.00" y="86.45" width="7.20" height="23.95" fill="#858585" />
<text x="12.40" y="100.83" font-size="9.9" fill="#121212" textLength="45.2" lengthAdjust="spacingAndGlyphs" stroke="#151515" stroke-width="0.25">2. Drums mix</text>
<rect x="2.40" y="110.50" width="0.90" height="27.05" fill="#15507a" />
<rect x="3.30" y="111.00" width="6.10" height="26.55" fill="#1fa7b2" />
<rect x="6.30" y="111.00" width="3.10" height="26.55" fill="#8b50e8" />
<rect x="6.10" y="110.50" width="3.30" height="1.00" fill="#2a2a2a" />
<rect x="9.60" y="111.00" width="113.60" height="26.55" fill="#2a2a2a" />
<rect x="9.60" y="111.70" width="113.60" height="25.25" fill="#909090" />
<rect x="9.60" y="111.70" width="113.60" height="1.30" fill="#9d9d9d" />
<rect x="9.60" y="132.75" width="113.60" height="4.20" fill="#959595" />
<rect x="116.00" y="113.00" width="7.20" height="23.95" fill="#858585" />
<text x="12.40" y="127.38" font-size="9.9" fill="#121212" textLength="70.6" lengthAdjust="spacingAndGlyphs" stroke="#151515" stroke-width="0.25">3. Slate: Synful Kit 1*</text>
<rect x="2.40" y="137.05" width="0.90" height="27.05" fill="#15507a" />
<rect x="3.30" y="137.55" width="6.10" height="26.55" fill="#1fa7b2" />
<rect x="6.30" y="137.55" width="3.10" height="26.55" fill="#e0601f" />
<rect x="6.10" y="137.05" width="3.30" height="1.00" fill="#2a2a2a" />
<rect x="9.60" y="137.55" width="113.60" height="26.55" fill="#2a2a2a" />
<rect x="9.60" y="138.25" width="113.60" height="25.25" fill="#909090" />
<rect x="9.60" y="138.25" width="113.60" height="1.30" fill="#9d9d9d" />
<rect x="9.60" y="159.30" width="113.60" height="4.20" fill="#959595" />
<rect x="116.00" y="139.55" width="7.20" height="23.95" fill="#858585" />
<text x="12.40" y="153.93" font-size="9.9" fill="#121212" textLength="76.4" lengthAdjust="spacingAndGlyphs" stroke="#151515" stroke-width="0.25">4. Slate: Crushed LoFi*</text>
<rect x="2.40" y="163.60" width="0.90" height="27.05" fill="#15507a" />
<rect x="3.30" y="164.10" width="6.10" height="26.55" fill="#1fa7b2" />
<rect x="6.30" y="164.10" width="3.10" height="26.55" fill="#2a8fe0" />
<rect x="6.10" y="163.60" width="3.30" height="1.00" fill="#2a2a2a" />
<rect x="9.60" y="164.10" width="113.60" height="26.55" fill="#2a2a2a" />
<rect x="9.60" y="164.80" width="113.60" height="25.25" fill="#909090" />
<rect x="9.60" y="164.80" width="113.60" height="1.30" fill="#9d9d9d" />
<rect x="9.60" y="185.85" width="113.60" height="4.20" fill="#959595" />
<rect x="116.00" y="166.10" width="7.20" height="23.95" fill="#858585" />
<text x="12.40" y="180.47" font-size="9.9" fill="#121212" textLength="60.5" lengthAdjust="spacingAndGlyphs" stroke="#151515" stroke-width="0.25">5. Slate: A Hats 2*</text>
<rect x="2.40" y="190.15" width="0.90" height="27.05" fill="#15507a" />
<rect x="3.30" y="190.65" width="6.10" height="26.55" fill="#1fa7b2" />
<rect x="6.30" y="190.65" width="3.10" height="26.55" fill="#2fa552" />
<rect x="6.10" y="190.15" width="3.30" height="1.00" fill="#2a2a2a" />
<rect x="9.60" y="190.65" width="113.60" height="26.55" fill="#2a2a2a" />
<rect x="9.60" y="191.35" width="113.60" height="25.25" fill="#909090" />
<rect x="9.60" y="191.35" width="113.60" height="1.30" fill="#9d9d9d" />
<rect x="9.60" y="212.40" width="113.60" height="4.20" fill="#959595" />
<rect x="116.00" y="192.65" width="7.20" height="23.95" fill="#858585" />
<text x="12.40" y="207.03" font-size="9.9" fill="#121212" textLength="57.1" lengthAdjust="spacingAndGlyphs" stroke="#151515" stroke-width="0.25">6. Slate: A Toms*</text>
<rect x="2.40" y="216.70" width="0.90" height="27.05" fill="#15507a" />
<rect x="3.30" y="217.20" width="6.10" height="26.55" fill="#1fa7b2" />
<rect x="6.30" y="217.20" width="3.10" height="26.55" fill="#27a9c8" />
<rect x="6.10" y="216.70" width="3.30" height="1.00" fill="#2a2a2a" />
<rect x="9.60" y="217.20" width="113.60" height="26.55" fill="#2a2a2a" />
<rect x="9.60" y="217.90" width="113.60" height="25.25" fill="#909090" />
<rect x="9.60" y="217.90" width="113.60" height="1.30" fill="#9d9d9d" />
<rect x="9.60" y="238.95" width="113.60" height="4.20" fill="#959595" />
<rect x="116.00" y="219.20" width="7.20" height="23.95" fill="#858585" />
<text x="12.40" y="233.58" font-size="9.9" fill="#121212" textLength="64.9" lengthAdjust="spacingAndGlyphs" stroke="#151515" stroke-width="0.25">7. Slate: A Cymbals</text>
<rect x="2.40" y="243.25" width="0.90" height="27.05" fill="#15507a" />
<rect x="3.30" y="243.75" width="6.10" height="26.55" fill="#1fa7b2" />
<rect x="2.40" y="243.25" width="7.00" height="1.00" fill="#2a2a2a" />
<rect x="9.60" y="243.75" width="113.60" height="26.55" fill="#2a2a2a" />
<rect x="9.60" y="244.45" width="113.60" height="25.25" fill="#909090" />
<rect x="9.60" y="244.45" width="113.60" height="1.30" fill="#9d9d9d" />
<rect x="9.60" y="265.50" width="113.60" height="4.20" fill="#959595" />
<rect x="116.00" y="245.75" width="7.20" height="23.95" fill="#858585" />
<text x="12.40" y="260.12" font-size="9.9" fill="#121212" textLength="64.9" lengthAdjust="spacingAndGlyphs" stroke="#151515" stroke-width="0.25">8. Obsidian: Throb*</text>
<rect x="2.40" y="269.80" width="0.90" height="27.05" fill="#15507a" />
<rect x="3.30" y="270.30" width="6.10" height="26.55" fill="#8652f0" />
<rect x="2.40" y="269.80" width="7.00" height="1.00" fill="#2a2a2a" />
<rect x="9.60" y="270.30" width="113.60" height="26.55" fill="#2a2a2a" />
<rect x="9.60" y="271.00" width="113.60" height="25.25" fill="#909090" />
<rect x="9.60" y="271.00" width="113.60" height="1.30" fill="#9d9d9d" />
<rect x="9.60" y="292.05" width="113.60" height="4.20" fill="#959595" />
<rect x="116.00" y="272.30" width="7.20" height="23.95" fill="#858585" />
<text x="12.40" y="286.68" font-size="9.9" fill="#121212" textLength="82.6" lengthAdjust="spacingAndGlyphs" stroke="#151515" stroke-width="0.25">9. Obsidian: Dirty Saws*</text>
<rect x="2.40" y="296.35" width="0.90" height="27.05" fill="#15507a" />
<rect x="3.30" y="296.85" width="6.10" height="26.55" fill="#d040c0" />
<rect x="2.40" y="296.35" width="7.00" height="1.00" fill="#2a2a2a" />
<rect x="9.60" y="296.85" width="113.60" height="26.55" fill="#2a2a2a" />
<rect x="9.60" y="297.55" width="113.60" height="25.25" fill="#909090" />
<rect x="9.60" y="297.55" width="113.60" height="1.30" fill="#9d9d9d" />
<rect x="9.60" y="318.60" width="113.60" height="4.20" fill="#959595" />
<rect x="116.00" y="298.85" width="7.20" height="23.95" fill="#858585" />
<text x="12.40" y="313.23" font-size="9.9" fill="#121212" textLength="102.9" lengthAdjust="spacingAndGlyphs" stroke="#151515" stroke-width="0.25">10. Obsidian: Add to the Bass*</text>
<rect x="2.40" y="322.90" width="0.90" height="27.05" fill="#15507a" />
<rect x="3.30" y="323.40" width="6.10" height="26.55" fill="#f05866" />
<rect x="2.40" y="322.90" width="7.00" height="1.00" fill="#2a2a2a" />
<rect x="9.60" y="323.40" width="113.60" height="26.55" fill="#2a2a2a" />
<rect x="9.60" y="324.10" width="113.60" height="25.25" fill="#909090" />
<rect x="9.60" y="324.10" width="113.60" height="1.30" fill="#9d9d9d" />
<rect x="9.60" y="345.15" width="113.60" height="4.20" fill="#959595" />
<rect x="116.00" y="325.40" width="7.20" height="23.95" fill="#858585" />
<text x="12.40" y="339.77" font-size="9.9" fill="#121212" textLength="105.6" lengthAdjust="spacingAndGlyphs" stroke="#151515" stroke-width="0.25">11. Obsidian: One Sample Pian..</text>
<rect x="2.40" y="349.45" width="0.90" height="27.05" fill="#15507a" />
<rect x="3.30" y="349.95" width="6.10" height="26.55" fill="#e8641c" />
<rect x="2.40" y="349.45" width="7.00" height="1.00" fill="#2a2a2a" />
<rect x="9.60" y="349.95" width="113.60" height="26.55" fill="#2a2a2a" />
<rect x="9.60" y="350.65" width="113.60" height="25.25" fill="#909090" />
<rect x="9.60" y="350.65" width="113.60" height="1.30" fill="#9d9d9d" />
<rect x="9.60" y="371.70" width="113.60" height="4.20" fill="#959595" />
<rect x="116.00" y="351.95" width="7.20" height="23.95" fill="#858585" />
<text x="12.40" y="366.32" font-size="9.9" fill="#121212" textLength="103.9" lengthAdjust="spacingAndGlyphs" stroke="#151515" stroke-width="0.25">12. Obsidian: Slow Sweep Pad*</text>
<rect x="2.40" y="376.00" width="0.90" height="27.05" fill="#15507a" />
<rect x="3.30" y="376.50" width="6.10" height="26.55" fill="#8fb02a" />
<rect x="2.40" y="376.00" width="7.00" height="1.00" fill="#2a2a2a" />
<rect x="9.60" y="376.50" width="113.60" height="26.55" fill="#2a2a2a" />
<rect x="9.60" y="377.20" width="113.60" height="25.25" fill="#909090" />
<rect x="9.60" y="377.20" width="113.60" height="1.30" fill="#9d9d9d" />
<rect x="9.60" y="398.25" width="113.60" height="4.20" fill="#959595" />
<rect x="116.00" y="378.50" width="7.20" height="23.95" fill="#858585" />
<text x="12.40" y="392.88" font-size="9.9" fill="#121212" textLength="91.0" lengthAdjust="spacingAndGlyphs" stroke="#151515" stroke-width="0.25">13. Obsidian: Stabby Horns</text>
<rect x="2.40" y="402.55" width="0.90" height="27.35" fill="#15507a" />
<rect x="3.30" y="403.05" width="6.10" height="26.85" fill="#22b060" />
<rect x="2.40" y="402.55" width="7.00" height="1.00" fill="#2a2a2a" />
<rect x="9.60" y="403.05" width="113.60" height="26.85" fill="#2a2a2a" />
<rect x="9.60" y="403.75" width="113.60" height="25.55" fill="#c6c6c6" />
<rect x="9.60" y="403.75" width="113.60" height="1.30" fill="#d2d2d2" />
<rect x="9.60" y="425.10" width="113.60" height="4.20" fill="#cccccc" />
<rect x="116.00" y="405.05" width="7.20" height="24.25" fill="#b6b6b6" />
<text x="12.40" y="419.43" font-size="9.9" fill="#121212" textLength="88.6" lengthAdjust="spacingAndGlyphs" stroke="#151515" stroke-width="0.25">14. Obsidian: Soft Landing</text>
<rect x="123.90" y="70.20" width="3.20" height="14.20" fill="#11426c" />
<path d="M125.7 70.8v13.2" stroke="#2f8fdc" stroke-width="1.6" stroke-dasharray="1.5 1.2"/>
<rect x="123.90" y="312.60" width="3.20" height="11.20" fill="#11426c" />
<path d="M125.7 313.20000000000005v10.2" stroke="#2f8fdc" stroke-width="1.6" stroke-dasharray="1.5 1.2"/>
<rect x="127.00" y="62.80" width="1.30" height="368.00" fill="#0c0c0c" />
</g>
<g id="bottom">
<rect x="0.00" y="429.90" width="650.00" height="57.10" fill="#101010" />
<rect x="0.00" y="432.10" width="126.80" height="22.50" fill="#1d1e1f" />
<rect x="128.20" y="432.20" width="106.60" height="22.80" fill="#2e2e2e" />
<rect x="235.00" y="432.20" width="327.00" height="22.80" fill="#191919" />
<rect x="563.60" y="432.40" width="30.60" height="22.40" fill="#2e2e2e" />
<rect x="595.60" y="432.40" width="30.20" height="22.40" fill="#2e2e2e" />
<rect x="627.00" y="432.40" width="23.00" height="22.40" fill="#2e2e2e" />
<g fill="#7a7a7a"><rect x="179" y="441.4" width="0.9" height="5"/><rect x="181" y="441.4" width="0.9" height="5"/><rect x="183" y="441.4" width="0.9" height="5"/></g>
<path d="M576.2 444h5.2M578.8 441.4v5.2" stroke="#c4c4c4" stroke-width="1.5"/>
<rect x="607.80" y="443.20" width="5.40" height="1.50" fill="#c4c4c4" />
<path d="M636.6 442.2l3 3" stroke="#c4c4c4" stroke-width="1.5"/><path d="M641 442.4v4.2h-4.2z" fill="#c4c4c4"/>
<text x="6.00" y="441.60" font-size="7.2" fill="#ececec" textLength="36.6" lengthAdjust="spacingAndGlyphs" >1 part selected</text>
<text x="6.00" y="450.60" font-size="7.2" fill="#ececec" textLength="76.0" lengthAdjust="spacingAndGlyphs" >53.01.00 - 57.01.00 [4.00.00]</text>
<rect x="0.00" y="456.00" width="126.80" height="31.00" fill="#1e1e1e" />
<rect x="128.50" y="455.80" width="64.20" height="31.20" fill="#232323" />
<rect x="193.80" y="455.80" width="64.20" height="31.20" fill="#232323" />
<rect x="259.10" y="455.80" width="64.20" height="31.20" fill="#232323" />
<rect x="324.40" y="455.80" width="64.20" height="31.20" fill="#232323" />
<rect x="389.70" y="455.80" width="64.20" height="31.20" fill="#232323" />
<rect x="455.00" y="455.80" width="64.20" height="31.20" fill="#232323" />
<rect x="520.30" y="455.80" width="64.20" height="31.20" fill="#232323" />
<rect x="585.60" y="455.80" width="64.20" height="31.20" fill="#232323" />
<text x="160.25" y="482.50" font-size="7" fill="#e0e0e0" text-anchor="middle" textLength="12.4" lengthAdjust="spacingAndGlyphs" >GRID</text>
<text x="225.55" y="482.50" font-size="7" fill="#e0e0e0" text-anchor="middle" textLength="17.6" lengthAdjust="spacingAndGlyphs" >ZOOM</text>
<text x="290.85" y="482.50" font-size="7" fill="#e0e0e0" text-anchor="middle" textLength="20.0" lengthAdjust="spacingAndGlyphs" >SELECT</text>
<text x="356.15" y="482.50" font-size="7" fill="#e0e0e0" text-anchor="middle" textLength="18.4" lengthAdjust="spacingAndGlyphs" >DRAW</text>
<text x="421.45" y="482.50" font-size="7" fill="#e0e0e0" text-anchor="middle" textLength="21.0" lengthAdjust="spacingAndGlyphs" >DELETE</text>
<text x="486.75" y="482.50" font-size="7" fill="#e0e0e0" text-anchor="middle" textLength="30.8" lengthAdjust="spacingAndGlyphs" >DUPLICATE</text>
<text x="552.05" y="482.50" font-size="7" fill="#e0e0e0" text-anchor="middle" textLength="24.0" lengthAdjust="spacingAndGlyphs" >ACTIONS</text>
<text x="617.35" y="482.50" font-size="7" fill="#e0e0e0" text-anchor="middle" textLength="35.6" lengthAdjust="spacingAndGlyphs" >PROPERTIES</text>
</g>
<g id="icons">
<g fill="#8a8a8a"><path d="M17.6 9.4h8.4l2.6 6.6v5.2h-13.6v-5.2zM18.8 10.8l-2 5h10l-2 -5z" fill-rule="evenodd"/><path d="M18.6 12h6.4l1 3h-8.4z" fill="#555"/><rect x="15" y="17.6" width="13.6" height="0.7" fill="#5c5c5c"/></g>
<g><rect x="58" y="9.5" width="9" height="2.8" fill="#fff"/><rect x="58" y="14.2" width="5.2" height="2.8" fill="#fff"/><rect x="58" y="18.4" width="7" height="2.8" fill="#fff"/><rect x="68.2" y="11" width="2.8" height="1.2" fill="#9a9a9e"/><rect x="64.4" y="15.6" width="6.6" height="1.2" fill="#9a9a9e"/><rect x="66.4" y="19.8" width="4.6" height="1.2" fill="#9a9a9e"/></g>
<g fill="#9a9a9a"><rect x="102" y="9.4" width="1.4" height="12"/><rect x="106.6" y="9.4" width="1.4" height="12"/><rect x="111.1" y="9.4" width="1.4" height="12"/><rect x="100.6" y="12.8" width="4.2" height="2.2"/><rect x="105.2" y="16" width="4.2" height="2.2"/><rect x="109.7" y="13.8" width="4.2" height="2.2"/></g>
<path d="M148 9v8l-8 -4z" fill="#444"/>
<path d="M303.4 9v8l8 -4z" fill="#1f1f1f"/>
<rect x="160.00" y="3.30" width="15.00" height="2.30" fill="#5b3aa8" />
<rect x="160.00" y="9.10" width="15.00" height="3.80" fill="#e24c62" />
<rect x="176.60" y="3.30" width="15.00" height="2.30" fill="#9a4a22" />
<rect x="176.60" y="9.10" width="15.00" height="3.80" fill="#e2671c" />
<rect x="193.20" y="3.30" width="15.00" height="2.30" fill="#1c6cb4" />
<rect x="193.20" y="9.10" width="15.00" height="3.80" fill="#8cb02c" />
<rect x="209.80" y="3.30" width="15.00" height="2.30" fill="#1a7a3c" />
<rect x="226.40" y="3.30" width="15.00" height="2.30" fill="#1c8a6a" />
<rect x="226.40" y="9.10" width="15.00" height="3.80" fill="#686868" />
<rect x="243.00" y="3.30" width="15.00" height="2.30" fill="#1c8088" />
<rect x="243.00" y="9.10" width="15.00" height="3.80" fill="#686868" />
<rect x="259.60" y="3.30" width="15.00" height="2.30" fill="#5a3ab0" />
<rect x="259.60" y="9.10" width="15.00" height="3.80" fill="#686868" />
<rect x="276.20" y="3.30" width="15.00" height="2.30" fill="#8a3a9a" />
<rect x="276.20" y="9.10" width="15.00" height="3.80" fill="#686868" />
<rect x="207.10" y="5.10" width="20.30" height="10.80" fill="#25b05e" stroke="#0c2a16" stroke-width="0.8" />
<text x="217.20" y="12.80" font-size="5.6" fill="#0a3a1c" text-anchor="middle" font-weight="bold" textLength="4.8" lengthAdjust="spacingAndGlyphs" >14</text>
<text x="226.00" y="27.00" font-size="7" fill="#a8a8a8" text-anchor="middle" textLength="57.0" lengthAdjust="spacingAndGlyphs" >Obsidian: Soft Landing</text>
<g fill="none" stroke="#8e8e8e" stroke-width="1.4"><path d="M339 9.6A6 6 0 1 1 333 15.6"/><path d="M371.6 9.6A6 6 0 1 0 377.6 15.6"/></g>
<path d="M339.6 6.8v5.8l-4.8 -2.9z" fill="#8e8e8e"/><path d="M371 6.8v5.8l4.8 -2.9z" fill="#8e8e8e"/>
<path d="M379.6 24.4h4.4l-2.2 3z" fill="#9a9a9a"/>
<text x="392.60" y="15.50" font-size="15.4" fill="#303030" textLength="7.0" lengthAdjust="spacingAndGlyphs" >0</text>
<text x="403.20" y="15.50" font-size="15.4" fill="#b4b4b4" textLength="48.8" lengthAdjust="spacingAndGlyphs" >144.01</text>
<text x="452.20" y="15.50" font-size="10.4" fill="#8c8c8c" textLength="15.6" lengthAdjust="spacingAndGlyphs" >.00</text>
<text x="393.00" y="27.40" font-size="6.8" fill="#b4b4b4" textLength="11.6" lengthAdjust="spacingAndGlyphs" >84.0</text>
<text x="449.00" y="27.40" font-size="6.8" fill="#b4b4b4" textLength="9.0" lengthAdjust="spacingAndGlyphs" >4/4</text>
<text x="491.40" y="27.40" font-size="6.8" fill="#b4b4b4" textLength="20.6" lengthAdjust="spacingAndGlyphs" >Q: 1/32S</text>
<path d="M504.7 4.9h5.4l1.3 9.2h-9z" fill="#f0506c"/><path d="M506 11.4l3 -5.2" stroke="#40101a" stroke-width="1.2"/>
<g fill="#8c8c8c"><rect x="533.6" y="9.8" width="2.2" height="11.4"/><path d="M546.4 9.8v11.4l-9.4 -5.7z"/></g>
<circle cx="584" cy="15.5" r="9.4" fill="none" stroke="#4a4a4a" stroke-width="1.2"/><path d="M580 10.4v10.2l9 -5.1z" fill="#9a9a9a"/>
<path d="M598.4 24.4h4.4l-2.2 3z" fill="#9a9a9a"/>
<circle cx="628" cy="15.5" r="6" fill="#8c8c8c"/>
<path d="M642 24.4h4.4l-2.2 3z" fill="#9a9a9a"/>
<g fill="none" stroke="#c0c0c0" stroke-width="1.2"><path d="M17.4 48.4l3.4 -3.6M23 44.8l3.4 3.6"/><circle cx="21.9" cy="43.4" r="2"/><circle cx="16.3" cy="50" r="2"/><circle cx="27.5" cy="50" r="2"/></g>
<path d="M59.8 40.3h6.4l3.6 3.6v8.8h-10z" fill="#b0b0b0"/><path d="M66.2 40.3v3.6h3.6z" fill="#6a6a6a"/><path d="M61.4 45.4h6.6M61.4 47.4h6.6M61.4 49.4h6.6M61.4 51.2h6.6" stroke="#666" stroke-width="0.8"/>
<g fill="none" stroke="#8e8e8e"><rect x="101.4" y="41" width="12.2" height="11.8" stroke-width="1.2"/><path d="M101.4 41.6h12.2" stroke-width="2.2"/><path d="M104.6 46.4l2.7 2.6l2.7 -2.6" stroke-width="1.2"/></g>
<circle cx="21.3" cy="471.7" r="5.4" fill="#c8c8c8"/><path d="M18.2 471.7h6.2M21.3 468.6v6.2" stroke="#1c1c1c" stroke-width="1.5"/><path d="M29.6 473.8h4l-2 2.8z" fill="#c8c8c8"/>
<circle cx="64" cy="471.7" r="5.8" fill="#f0485e"/><path d="M60.6 471.7h6.8" stroke="#3a0a14" stroke-width="1.6"/>
<path d="M109.6 467.9h-8.4v8.8h9.6v-4.6" fill="none" stroke="#c8c8c8" stroke-width="1.3"/><path d="M103.4 471l2.6 2.8l6.6 -7.6" fill="none" stroke="#c8c8c8" stroke-width="1.4"/>
<circle cx="135.4" cy="460.6" r="2.1" fill="#1e9be8"/>
<path d="M153.6 465h12.8M153.6 468.6h12.8M156.2 462.6v8M160 462.6v8M163.8 462.6v8" stroke="#2b78ba" stroke-width="0.9" fill="none"/>
<circle cx="223.5" cy="464" r="3" fill="#3a2a80" stroke="#8e72dc" stroke-width="1.6"/><path d="M225.8 466.3l4.9 4.7" stroke="#8e72dc" stroke-width="2"/>
<path d="M284.6 462.2h11.4v7h-11.4z" fill="none" stroke="#c23fb4" stroke-width="1.2" stroke-dasharray="2 0.8"/><path d="M293.6 469.2h5M296.1 466.8v4.8" stroke="#c23fb4" stroke-width="1.1"/>
<path d="M352.6 470.6l8.4 -8.4" stroke="#ea601c" stroke-width="2.6"/><path d="M351.2 472l0.8 -2.4l1.6 1.6z" fill="#ea601c"/>
<path d="M417.2 462.2l9.6 9.6M426.8 462.2l-9.6 9.6" stroke="#e24058" stroke-width="1.3"/>
<path d="M460.6 462.4h3.4l-1.7 -2.8z" fill="#b4b464"/>
<rect x="482" y="462" width="7" height="7.4" fill="#6e9018"/><rect x="485" y="464.2" width="7" height="7.8" fill="#94bc24" stroke="#252525" stroke-width="0.7"/>
<circle cx="549.6" cy="465.2" r="3.2" fill="#1eb052"/><path d="M549.9 465.5l-1.5 -4.6l-3.4 3.2z" fill="#252525"/><path d="M551.4 467l5.4 4.4" stroke="#1eb052" stroke-width="2.3" stroke-linecap="round"/>
<g fill="#22a8ba"><rect x="611.4" y="462.6" width="2.2" height="2"/><rect x="614.8" y="462.6" width="9.8" height="2"/><rect x="611.4" y="465.9" width="2.2" height="2"/><rect x="614.8" y="465.9" width="9.8" height="2"/><rect x="611.4" y="469.2" width="2.2" height="2"/><rect x="614.8" y="469.2" width="9.8" height="2"/></g>
</g>
</svg></body></html>
